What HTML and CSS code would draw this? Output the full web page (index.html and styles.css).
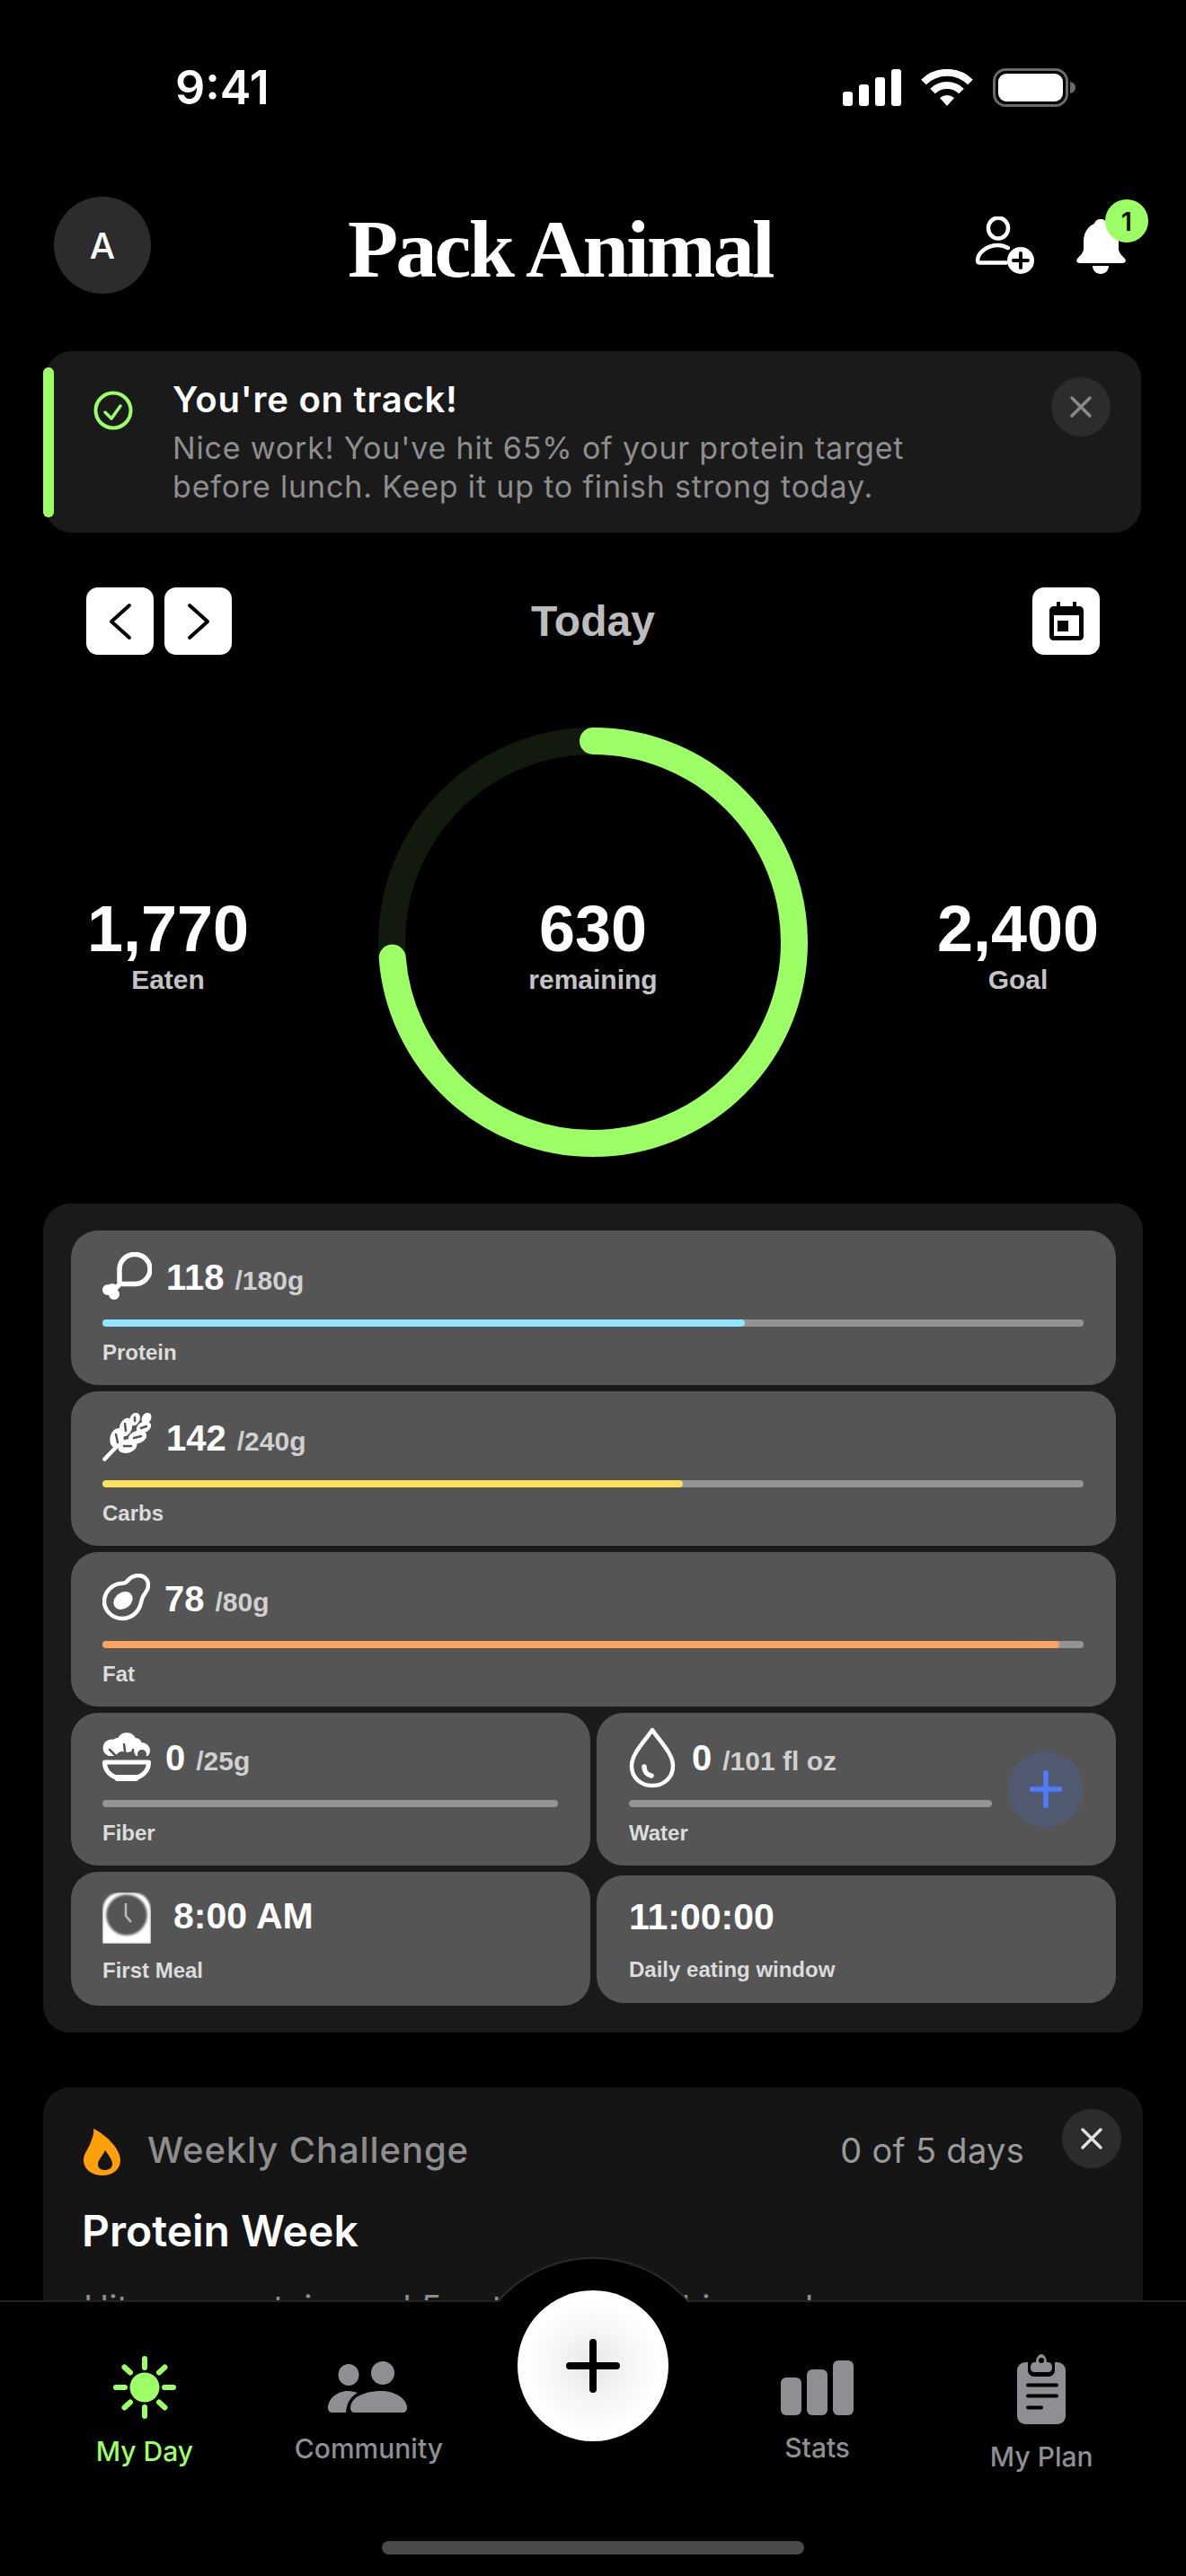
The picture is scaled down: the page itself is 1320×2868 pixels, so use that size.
FILE: index.html
```html
<!DOCTYPE html>
<html lang="en">
<head>
<meta charset="UTF-8">
<meta name="viewport" content="width=device-width, initial-scale=1.0">
<title>Pack Animal</title>
<link rel="stylesheet" href="styles.css">
</head>
<body>
<div id="screen">

  <div class="status">
    <span class="status-time">9:41</span>
    <div class="status-icons">
      <svg width="65" height="41" viewBox="0 0 65 41"><rect x="0" y="25" width="11" height="16" rx="3"/><rect x="18" y="17" width="11" height="24" rx="3"/><rect x="36" y="9" width="11" height="32" rx="3"/><rect x="54" y="0" width="11" height="41" rx="3"/></svg>
      <svg width="58" height="41" viewBox="0 0 58 41"><path class="wifi-arc" d="M3 14.500A37 37 0 0 1 55 14.500"/><path class="wifi-arc" d="M13 24.500A23 23 0 0 1 45 24.500"/><path d="M21 32A12 12 0 0 1 37 32L29 41Z"/></svg>
      <svg width="92" height="43" viewBox="0 0 92 43"><rect class="batt-case" x="1.500" y="1.500" width="81" height="40" rx="13"/><rect x="6" y="6" width="72" height="31" rx="9"/><path class="batt-cap" d="M86 15C90 16 92 18 92 21.500C92 25 90 27 86 28Z"/></svg>
    </div>
  </div>

  <header class="topbar">
    <div class="avatar">A</div>
    <div class="brand">Pack Animal</div>
    <div class="topbar-icons">
      <svg width="66" height="64" viewBox="0 0 66 64"><ellipse class="line-w" cx="26" cy="13" rx="11" ry="11.500"/><path class="line-w" d="M37 35C33 33 29 32 26 32C13 32 3 41 3 49C3 51 4 51.500 6 51.500H35"/><circle class="fill-w" cx="51" cy="49" r="15"/><path class="line-k" d="M43 49H59M51 41V57"/></svg>
      <div class="bell">
        <svg width="55" height="61" viewBox="0 0 55 61"><path class="fill-w" d="M27 0C31 0 33 2 34 5C42 8 47 15 47 24V33C47 37 51 41 54 44C56 47 54 49 51 49H4C1 49-1 47 1 44C4 41 8 37 8 33V24C8 15 13 8 20 5C21 2 23 0 27 0Z"/><path class="fill-w" d="M18 52H36C36 57 32 61 27 61C22 61 18 57 18 52Z"/></svg>
        <span class="badge">1</span>
      </div>
    </div>
  </header>

  <section class="banner">
    <div class="banner-accent"></div>
    <svg class="banner-check" width="44" height="44" viewBox="0 0 44 44"><circle cx="22" cy="22" r="19.500"/><path d="M13 24L20 31L30 17"/></svg>
    <div class="banner-text">
      <div class="banner-title">You're on track!</div>
      <div class="banner-body">Nice work! You've hit 65% of your protein target<br>before lunch. Keep it up to finish strong today.</div>
    </div>
    <button class="close-btn close-dim"><svg width="26" height="26" viewBox="0 0 26 26"><path d="M3 3L23 23M23 3L3 23"/></svg></button>
  </section>

  <div class="datebar">
    <div class="date-nav">
      <button class="date-btn"><svg width="40" height="44" viewBox="0 0 40 44"><path d="M30 4L10 22L30 40"/></svg></button>
      <button class="date-btn"><svg width="40" height="44" viewBox="0 0 40 44"><path d="M10 4L30 22L10 40"/></svg></button>
    </div>
    <div class="date-title">Today</div>
    <button class="date-btn date-cal"><svg width="40" height="46" viewBox="0 0 40 46"><path class="cal-body" fill-rule="evenodd" d="M9 1H13V6H27V1H31V6H34C37 6 39 8 39 11V39C39 42 37 44 34 44H6C3 44 1 42 1 39V11C1 8 3 6 6 6H9ZM6 16V38C6 39 6 39 7 39H33C34 39 34 39 34 38V16Z"/><rect class="cal-body" x="10" y="22" width="12" height="12"/></svg></button>
  </div>

  <section class="summary">
    <div class="stat">
      <div class="stat-num">1,770</div>
      <div class="stat-label">Eaten</div>
    </div>
    <div class="ring">
      <svg width="478" height="478" viewBox="0 0 478 478">
        <circle class="ring-track" cx="239" cy="239" r="224"/>
        <circle class="ring-fill" cx="239" cy="239" r="224" pathLength="100" stroke-dasharray="73.750 100" transform="rotate(-90 239 239)"/>
      </svg>
      <div class="stat ring-center">
        <div class="stat-num">630</div>
        <div class="stat-label">remaining</div>
      </div>
    </div>
    <div class="stat">
      <div class="stat-num">2,400</div>
      <div class="stat-label">Goal</div>
    </div>
  </section>

  <section class="macros">
    <div class="card">
      <div class="card-head">
        <svg class="card-icon" width="55" height="53" viewBox="0 0 55 53"><path class="line-b" d="M19 19A17 16.500 0 1 1 36 35.500H22C20 35.500 19 34 19 32Z"/><path class="line-b" d="M20 35L12 43"/><circle class="fill-w" cx="6" cy="42" r="6"/><circle class="fill-w" cx="13" cy="47" r="6"/><circle class="fill-w" cx="11" cy="41" r="6"/></svg>
        <span class="val">118</span><span class="goal">/180g</span>
      </div>
      <div class="bar"><div class="bar-fill fill-protein" style="width: 65.5%"></div></div>
      <div class="card-label">Protein</div>
    </div>
    <div class="card">
      <div class="card-head">
        <svg class="card-icon" width="55" height="54" viewBox="0 0 55 54"><path class="line-w" d="M2.500 51.500L22 31"/><g class="wheat"><ellipse cx="16" cy="28" rx="7.500" ry="11" transform="rotate(15 16 28)"/><ellipse cx="26" cy="16" rx="7" ry="10.500" transform="rotate(18 26 16)"/><ellipse cx="36" cy="7" rx="5.500" ry="7.500" transform="rotate(25 36 7)"/><ellipse cx="28" cy="37" rx="7.500" ry="11" transform="rotate(72 28 37)"/><ellipse cx="39" cy="27" rx="7" ry="10.500" transform="rotate(72 39 27)"/><ellipse cx="46" cy="16" rx="6" ry="8.500" transform="rotate(65 46 16)"/><ellipse cx="49" cy="6" rx="5" ry="6.500" transform="rotate(30 49 6)"/></g><path class="wheat-slit" d="M17 33L15 24M26 20L25 12M36 9L36 5M24 37L32 37M35 28L43 26M43 17L49 15"/></svg>
        <span class="val">142</span><span class="goal">/240g</span>
      </div>
      <div class="bar"><div class="bar-fill fill-carbs" style="width: 59.2%"></div></div>
      <div class="card-label">Carbs</div>
    </div>
    <div class="card">
      <div class="card-head">
        <svg class="card-icon" width="53" height="53" viewBox="0 0 53 53"><path class="line-w" d="M27 9C31 4 35 2 40 2C47 2 51 7 51 13C51 18 48 21 46 24C44 27 44 29 43 32C41 42 33 50 22 50C11 50 2 41 2 31C2 20 11 12 20 11C23 11 25 11 27 9Z"/><ellipse class="fill-w" cx="23" cy="30" rx="11.500" ry="9" transform="rotate(-38 23 30)"/></svg>
        <span class="val">78</span><span class="goal">/80g</span>
      </div>
      <div class="bar"><div class="bar-fill fill-fat" style="width: 97.5%"></div></div>
      <div class="card-label">Fat</div>
    </div>

    <div class="macro-row">
      <div class="card card-short">
        <div class="card-head">
          <svg class="card-icon" width="54" height="54" viewBox="0 0 54 54"><circle class="fill-w" cx="27" cy="11" r="11"/><circle class="fill-w" cx="10" cy="17" r="9.500"/><circle class="fill-w" cx="17" cy="14" r="8"/><circle class="fill-w" cx="37" cy="13" r="7"/><circle class="fill-w" cx="44" cy="20" r="9"/><circle class="bowl-hole" cx="44" cy="24" r="5"/><rect class="bowl-hole" x="0" y="26" width="54" height="6"/><path class="bowl-slit" d="M8 19L17 28M24 13L26 28M34 19L33 28"/><path class="bowl-line" d="M2.500 33H51.500C51.500 42 46 47 39 50H15C8 47 2.500 42 2.500 33Z"/><rect class="fill-w" x="14" y="47" width="26" height="7" rx="2"/></svg>
          <span class="val">0</span><span class="goal">/25g</span>
        </div>
        <div class="bar"><div class="bar-fill" style="width: 0%"></div></div>
        <div class="card-label">Fiber</div>
      </div>
      <div class="card card-short card-water">
        <div class="water-main">
          <div class="card-head">
            <svg class="card-icon icon-drop" width="52" height="68" viewBox="0 0 52 68"><path class="line-w" d="M26 3C33 14 49 29 49 43C49 56 39 65 26 65C13 65 3 56 3 43C3 29 19 14 26 3Z"/><path class="line-b" d="M17 44C17 49 20 53 25 54"/></svg>
            <span class="val">0</span><span class="goal">/101 fl oz</span>
          </div>
          <div class="bar"><div class="bar-fill" style="width: 0%"></div></div>
          <div class="card-label">Water</div>
        </div>
        <button class="add-btn"><svg width="36" height="42" viewBox="0 0 36 42"><path d="M18 2.500V39.500M2.500 21H33.500"/></svg></button>
      </div>
    </div>

    <div class="macro-row row-center">
      <div class="card card-meal">
        <div class="card-head">
          <svg class="card-icon icon-clock" width="54" height="57" viewBox="0 0 54 57"><path class="clock-bg" d="M22 0H32C46 0 54 8 54 22V57H0V22C0 8 8 0 22 0Z"/><circle class="clock-face" cx="27" cy="25" r="23"/><path class="clock-hand" d="M26 12V26L32 33"/></svg>
          <span class="val val-time">8:00 AM</span>
        </div>
        <div class="card-label label-meal">First Meal</div>
      </div>
      <div class="card card-window">
        <div class="val window-time">11:00:00</div>
        <div class="card-label label-window">Daily eating window</div>
      </div>
    </div>
  </section>

  <section class="challenge">
    <div class="challenge-head">
      <svg class="flame" width="42" height="52" viewBox="0 0 42 52"><path fill-rule="evenodd" d="M11 0C24 6 41 22 41 35C41 45 33 52 21 52C9 52 0 45 0 35C0 27 6 22 8 15C10 10 12 5 11 0ZM24 24C21 31 16 34 16 40C16 44 20 46 24 46C28 46 32 44 32 39C32 35 29 31 24 24Z"/></svg>
      <div class="challenge-name">Weekly Challenge</div>
      <div class="challenge-count">0 of 5 days</div>
      <button class="close-btn close-light"><svg width="26" height="26" viewBox="0 0 26 26"><path d="M3 3L23 23M23 3L3 23"/></svg></button>
    </div>
    <div class="challenge-title">Protein Week</div>
    <div class="challenge-desc">Hit your protein goal 5 out of 7 days this week.</div>
  </section>

  <nav class="tabbar">
    <div class="tab-bump"></div>
    <div class="tabs">
      <div class="tab tab-active tab-day">
        <svg width="70" height="70" viewBox="0 0 70 70"><circle class="sun-disc" cx="35" cy="35" r="16.500"/><path class="sun-rays" d="M35 3V13M35 57V67M3 35H13M57 35H67M12.500 12.500L19 18.500M51 51.500L57.500 57.500M57.500 12.500L51 18.500M19 51.500L12.500 57.500"/></svg>
        <span>My Day</span>
      </div>
      <div class="tab tab-community">
        <svg width="90" height="58" viewBox="0 0 90 58"><ellipse cx="23" cy="16" rx="11.500" ry="12"/><circle cx="61" cy="14" r="13"/><path d="M0 53C0 43 10 34 22 34C26 34 30 35 33 36C26 40 21 46 20 58H5C2 58 0 56 0 53Z"/><path d="M25 53C25 43 37 34 60 34C75 34 88 43 88 53C88 56 86 58 83 58H30C27 58 25 56 25 53Z"/></svg>
        <span>Community</span>
      </div>
      <div class="tab tab-add">
        <button class="fab"><svg width="60" height="60" viewBox="0 0 60 60"><path d="M30 4V56M4 30H56"/></svg></button>
      </div>
      <div class="tab tab-stats">
        <svg width="81" height="61" viewBox="0 0 81 61"><rect x="0" y="19" width="23" height="42" rx="6"/><rect x="29" y="10" width="23" height="51" rx="6"/><rect x="58" y="0" width="23" height="61" rx="6"/></svg>
        <span>Stats</span>
      </div>
      <div class="tab tab-plan">
        <svg width="54" height="78" viewBox="0 0 54 78"><rect x="0" y="9" width="54" height="69" rx="9"/><rect class="clip-gap" x="12" y="2" width="30" height="23" rx="7"/><path d="M15 15C15 10 17 9 21 9C21 4 24 0 27 0C30 0 33 4 33 9C37 9 39 10 39 15C39 19 37 20 34 20H20C17 20 15 19 15 15Z"/><circle class="clip-gap" cx="27" cy="7" r="3"/><path class="plan-line" d="M12 34.500H44M12 46.500H44M12 59.500H27"/></svg>
        <span>My Plan</span>
      </div>
    </div>
    <div class="home-bar"></div>
  </nav>

</div>
</body>
</html>
```

FILE: styles.css
```css
* {
  box-sizing: border-box;
}
body {
  margin: 0;
  background-color: #000;
  color: #fff;
  font-family: Inter, "Noto Sans", sans-serif;
}
button {
  border: none;
  padding: 0;
  font: inherit;
  display: flex;
  align-items: center;
  justify-content: center;
}
svg {
  display: block;
  flex-shrink: 0;
}
#screen {
  position: relative;
  width: 1320px;
  height: 2868px;
  overflow: hidden;
}

/* shared icon paints */
.line-w {
  fill: none;
  stroke: #fff;
  stroke-width: 4.5;
  stroke-linecap: round;
  stroke-linejoin: round;
}
.line-b {
  fill: none;
  stroke: #fff;
  stroke-width: 5.5;
  stroke-linecap: round;
  stroke-linejoin: round;
}
.line-k {
  fill: none;
  stroke: #000;
  stroke-width: 4;
  stroke-linecap: round;
}
.fill-w {
  fill: #fff;
}

/* status bar */
.status {
  height: 194px;
  display: flex;
  align-items: center;
  justify-content: space-between;
  padding: 0 123px 0 195px;
}
.status-time {
  font-size: 52px;
  font-weight: 600;
}
.status-icons {
  display: flex;
  align-items: center;
  gap: 22px;
}
.status-icons svg {
  fill: #fff;
}
.wifi-arc {
  fill: none;
  stroke: #fff;
  stroke-width: 8;
}
.batt-case {
  fill: none !important;
  stroke: #6a6a6a;
  stroke-width: 3;
}
.batt-cap {
  fill: #6a6a6a;
}

/* top bar */
.topbar {
  margin-top: 25px;
  height: 108px;
  display: flex;
  align-items: center;
  padding: 0 67px 0 60px;
}
.avatar {
  width: 108px;
  height: 108px;
  border-radius: 50%;
  background-color: #2c2c2c;
  display: flex;
  align-items: center;
  justify-content: center;
  font-size: 40px;
  font-weight: 500;
}
.brand {
  margin: 8px 0 0 219px;
  font-family: "Liberation Serif", serif;
  font-size: 92px;
  font-weight: 700;
  line-height: 100px;
  letter-spacing: -2.8px;
  white-space: nowrap;
}
.topbar-icons {
  margin-left: auto;
  display: flex;
  align-items: flex-end;
  gap: 47px;
}
.bell {
  position: relative;
}
.badge {
  position: absolute;
  left: 32px;
  top: -22px;
  width: 48px;
  height: 48px;
  border-radius: 50%;
  background-color: #9dff66;
  color: #111;
  font-size: 29px;
  font-weight: 600;
  display: flex;
  align-items: center;
  justify-content: center;
}

/* banner */
.banner {
  margin: 64px 50px 0;
  height: 202px;
  background-color: #1a1a1a;
  border-radius: 30px;
  display: flex;
  align-items: flex-start;
}
.banner-accent {
  width: 12px;
  height: 167px;
  margin: 18px 0 0 -2px;
  border-radius: 6px;
  background-color: #9dff66;
}
.banner-check {
  margin: 44px 0 0 44px;
}
.banner-check circle {
  fill: none;
  stroke: #9dff66;
  stroke-width: 4;
}
.banner-check path {
  fill: none;
  stroke: #9dff66;
  stroke-width: 3.5;
  stroke-linecap: round;
  stroke-linejoin: round;
}
.banner-text {
  margin: 28px 0 0 44px;
  flex: 1;
}
.banner-title {
  font-size: 40px;
  font-weight: 600;
  line-height: 52px;
  letter-spacing: 0.75px;
}
.banner-body {
  margin-top: 6px;
  font-size: 34px;
  line-height: 43px;
  letter-spacing: 0.83px;
  color: #8e8e8e;
  white-space: nowrap;
}
.close-btn {
  width: 66px;
  height: 66px;
  border-radius: 50%;
  background-color: #2c2c2c;
}
.close-btn path {
  fill: none;
  stroke-width: 3.5;
  stroke-linecap: round;
}
.close-dim {
  margin: 29px 34px 0 0;
}
.close-dim path {
  stroke: #8a8a8a;
}
.close-light path {
  stroke: #e0e0e0;
}

/* date row */
.datebar {
  margin-top: 61px;
  padding: 0 96px;
  display: grid;
  grid-template-columns: 1fr auto 1fr;
  align-items: center;
}
.date-nav {
  display: flex;
  gap: 12px;
}
.date-btn {
  width: 75px;
  height: 75px;
  border-radius: 13px;
  background-color: #fff;
}
.date-cal {
  justify-self: end;
}
.date-btn path {
  fill: none;
  stroke: #000;
  stroke-width: 4;
  stroke-linecap: round;
  stroke-linejoin: round;
}
.date-btn .cal-body {
  fill: #000;
  stroke: none;
}
.date-title {
  font-family: "Liberation Sans", Arial, sans-serif;
  font-size: 48px;
  font-weight: 700;
  color: #bdbdbd;
}

/* calorie ring */
.summary {
  margin-top: 81px;
  padding: 0 88px;
  display: flex;
  align-items: center;
  justify-content: space-between;
}
.stat {
  width: 198px;
  text-align: center;
  font-family: "Liberation Sans", Arial, sans-serif;
  font-weight: 700;
  margin-top: 5px;
}
.stat-num {
  font-size: 72px;
  line-height: 78px;
}
.stat-label {
  font-size: 30px;
  line-height: 36px;
  color: #c4c4c4;
}
.ring {
  display: grid;
  place-items: center;
}
.ring > * {
  grid-area: 1 / 1;
}
.ring-track,
.ring-fill {
  fill: none;
  stroke-width: 30;
}
.ring-track {
  stroke: #111a0c;
}
.ring-fill {
  stroke: #9dff66;
  stroke-linecap: round;
}

/* macro panel */
.macros {
  margin: 52px 48px 0;
  padding: 30px 30px 30px 31px;
  height: 923px;
  background-color: #1a1a1a;
  border-radius: 30px;
  display: flex;
  flex-direction: column;
  gap: 7px;
  font-family: "Liberation Sans", Arial, sans-serif;
  font-weight: 700;
}
.card {
  height: 172px;
  padding: 24px 36px 0 35px;
  background-color: #555;
  border-radius: 30px;
}
.card-head {
  display: flex;
  align-items: baseline;
  height: 53px;
}
.card-icon {
  align-self: flex-start;
  margin-right: 16px;
}
.val {
  font-size: 40px;
  line-height: 56px;
}
.goal {
  margin-left: 12px;
  font-size: 30px;
  color: #d0d0d0;
}
.bar {
  margin-top: 22px;
  height: 8px;
  border-radius: 4px;
  background-color: #949494;
  overflow: hidden;
}
.bar-fill {
  height: 100%;
  border-radius: 4px;
}
.fill-protein {
  background-color: #90e6ff;
}
.fill-carbs {
  background-color: #ffdf5e;
}
.fill-fat {
  background-color: #ffa45c;
}
.card-label {
  margin-top: 14px;
  font-size: 24px;
  line-height: 30px;
  color: #dcdcdc;
}
.macro-row {
  display: grid;
  grid-template-columns: 1fr 1fr;
  gap: 7px;
}
.card-short {
  height: 170px;
  padding-top: 22px;
}
.wheat ellipse {
  fill: #fff;
}
.wheat-slit,
.bowl-slit {
  fill: none;
  stroke: #555;
  stroke-width: 2.500;
  stroke-linecap: round;
}
.bowl-hole {
  fill: #555;
}
.bowl-line {
  fill: none;
  stroke: #fff;
  stroke-width: 5;
  stroke-linejoin: round;
}
.card-water {
  display: flex;
  padding-left: 36px;
}
.water-main {
  flex: 1;
  min-width: 0;
}
.icon-drop {
  margin: -6px 18px 0 0;
}
.add-btn {
  width: 84px;
  height: 84px;
  margin: 21px 0 0 18px;
  border-radius: 50%;
  background-color: #525a72;
}
.add-btn path {
  fill: none;
  stroke: #4d7cff;
  stroke-width: 5.500;
  stroke-linecap: round;
}
.row-center {
  align-items: center;
}
.card-meal {
  height: 149px;
  padding-top: 23px;
}
.card-meal .card-head {
  height: 57px;
}
.icon-clock {
  margin-right: 25px;
}
.clock-bg {
  fill: #fff;
  filter: blur(1px);
}
.clock-face {
  fill: #555;
  stroke: #c8c8c8;
  stroke-width: 1.500;
  filter: blur(1px);
}
.clock-hand {
  fill: none;
  stroke: #b8b8b8;
  stroke-width: 2.500;
  filter: blur(0.5px);
}
.val-time {
  font-size: 41px;
  line-height: 52px;
}
.label-meal {
  margin-top: 15px;
}
.card-window {
  height: 142px;
  padding: 16px 36px 0;
}
.window-time {
  font-size: 41px;
  line-height: 60px;
}

/* weekly challenge */
.challenge {
  margin: 61px 48px 0;
  height: 400px;
  padding: 24px 24px 0 45px;
  background-color: #151515;
  border-radius: 30px;
}
.challenge-head {
  display: flex;
  align-items: flex-start;
}
.flame {
  margin-top: 22px;
  fill: #ff9f0a;
}
.challenge-name {
  margin: 21px 0 0 29px;
  font-size: 40px;
  font-weight: 500;
  line-height: 50px;
  letter-spacing: 0.9px;
  color: #8e8e8e;
}
.challenge-count {
  margin: 21px 0 0 auto;
  font-size: 38px;
  line-height: 50px;
  letter-spacing: 0.3px;
  color: #9a9a9a;
}
.challenge-head .close-btn {
  margin-left: 42px;
}
.challenge-title {
  margin: 32px 0 0 -2px;
  font-size: 48px;
  font-weight: 600;
  line-height: 60px;
}
.challenge-desc {
  margin-top: 31px;
  font-size: 38px;
  line-height: 48px;
  color: #8e8e8e;
  white-space: nowrap;
}

/* bottom tabs */
.tabbar {
  position: absolute;
  left: 0;
  right: 0;
  top: 2561px;
  height: 307px;
  background-color: #000;
  border-top: 2px solid #222;
  display: flex;
  flex-direction: column;
}
.tab-bump {
  position: absolute;
  left: 519px;
  top: -50px;
  width: 282px;
  height: 282px;
  border-radius: 50%;
  background-color: #000;
  border: 2px solid #2a2a2a;
  clip-path: inset(0 0 232px 0);
}
.tabs {
  position: relative;
  display: grid;
  grid-template-columns: repeat(5, 1fr);
  padding: 0 36px;
  height: 266px;
}
.tab {
  display: flex;
  flex-direction: column;
  align-items: center;
  font-size: 30px;
  font-weight: 500;
  color: #8e8e93;
}
.tab svg {
  fill: #8e8e93;
}
.tab span {
  line-height: 36px;
}
.tab-day {
  padding-top: 60px;
  gap: 18px;
  color: #9dff66;
}
.sun-disc {
  fill: #9dff66;
}
.sun-rays {
  fill: none;
  stroke: #9dff66;
  stroke-width: 6;
  stroke-linecap: round;
}
.tab-community {
  padding-top: 65px;
  gap: 22px;
}
.tab-stats {
  padding-top: 65px;
  gap: 18px;
}
.tab-plan {
  padding-top: 58px;
  gap: 18px;
}
.clip-gap {
  fill: #000 !important;
}
.plan-line {
  fill: none;
  stroke: #000;
  stroke-width: 4;
  stroke-linecap: round;
}
.tab-add {
  padding-top: 0;
}
.fab {
  margin-top: -13px;
  width: 168px;
  height: 168px;
  border-radius: 50%;
  background: radial-gradient(circle, #e6e6e6 0%, #f6f6f6 35%, #fff 65%);
}
.fab svg path {
  fill: none;
  stroke: #000;
  stroke-width: 8;
  stroke-linecap: round;
}
.home-bar {
  margin: auto auto 24px;
  width: 470px;
  height: 15px;
  border-radius: 8px;
  background-color: #4a4a4a;
}
```
